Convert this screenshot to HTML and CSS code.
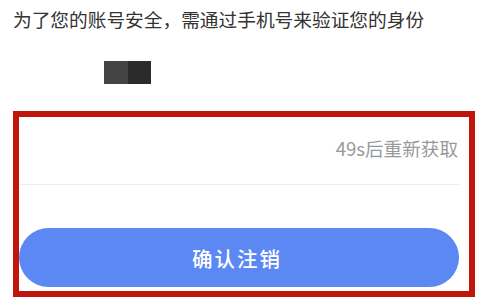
FILE: index.html
```html
<!DOCTYPE html>
<html lang="zh-CN">
<head>
  <meta charset="UTF-8">
  <meta name="viewport" content="width=device-width, initial-scale=1.0">
  <title>验证身份</title>
  <link rel="stylesheet" href="styles.css">
</head>
<body>
  <div class="page">
    <div class="page-title">为了您的账号安全，需通过手机号来验证您的身份</div>

    <div class="phone-row">
      <span class="mask mask-left"></span><span class="mask mask-right"></span>
    </div>

    <div class="verify-box">
      <div class="code-row">
        <input type="text" class="code-input" aria-label="验证码">
        <span class="countdown">49s后重新获取</span>
      </div>
      <div class="divider"></div>
      <button class="confirm-button">确认注销</button>
    </div>
  </div>
</body>
</html>
```

FILE: styles.css
```css
:root {
  --text-dark: #333;
  --text-gray: #999;
  --box-red: #bf170e;
  --button-blue: #5b88f2;
}

body {
  margin: 0;
  background-color: #fff;
  font-family: 'Noto Sans CJK SC', 'Noto Sans', sans-serif;
  color: var(--text-dark);
}

.page {
  padding: 7px 8px 0 13px;
}

.page-title {
  font-size: 18.7px;
  line-height: 24px;
  color: var(--text-dark);
  white-space: nowrap;
}

.phone-row {
  display: flex;
  margin-top: 30px;
  padding-left: 91px;
  height: 23px;
}

.mask {
  display: block;
  height: 23px;
}

.mask-left {
  width: 24px;
  background-color: #444;
}

.mask-right {
  width: 23px;
  background-color: #2b2b2b;
}

.verify-box {
  margin-top: 27px;
  width: 462px;
  box-sizing: border-box;
  border: 6px solid var(--box-red);
  display: flex;
  flex-direction: column;
}

.code-row {
  height: 67px;
  display: flex;
  align-items: center;
  padding: 0 11px 6px 0;
  box-sizing: border-box;
}

.code-input {
  flex: 1;
  border: none;
  outline: none;
  background: transparent;
  font-size: 18px;
}

.countdown {
  font-size: 18.6px;
  color: var(--text-gray);
  white-space: nowrap;
}

.divider {
  height: 1px;
  background-color: #eee;
  margin-right: 9px;
}

.confirm-button {
  margin: 43px 0 4px 0;
  width: 440px;
  height: 59px;
  border: none;
  border-radius: 30px;
  background-color: var(--button-blue);
  color: #fff;
  font-family: inherit;
  font-size: 20.5px;
  font-weight: 500;
  letter-spacing: 2px;
  padding: 0;
  padding-right: 4px;
}
```
